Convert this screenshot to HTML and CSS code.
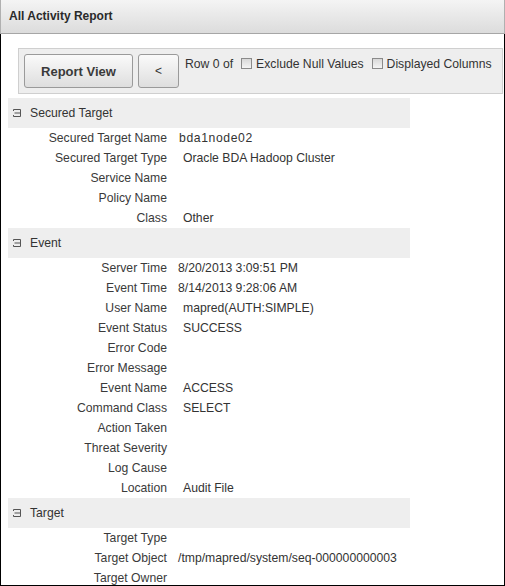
FILE: index.html
```html
<!DOCTYPE html>
<html>
<head>
<meta charset="utf-8">
<link rel="stylesheet" href="styles.css">
</head>
<body>
<div class="frame">
  <div class="header">All Activity Report</div>
  <div class="content">
    <div class="toolbar">
      <button class="btn btn-main">Report View</button>
      <button class="btn btn-prev">&lt;</button>
      <span class="tb-text">Row 0 of</span>
      <label class="check"><span class="cb"></span>Exclude Null Values</label>
      <label class="check"><span class="cb"></span>Displayed Columns</label>
    </div>

    <div class="section">
      <div class="sec-head"><svg class="sec-icon" width="8" height="8" viewBox="0 0 8 8"><path d="M0.5 0.5H7.5V7.5H0.5M0.5 0.5V2M0.5 7.5V6M1.5 4H7.5" fill="none" stroke="#555" stroke-width="1"/></svg>Secured Target</div>
      <div class="rows">
        <div class="lbl">Secured Target Name</div><div class="val ind sp">bda1node02</div>
        <div class="lbl">Secured Target Type</div><div class="val ind">Oracle BDA Hadoop Cluster</div>
        <div class="lbl">Service Name</div><div class="val"></div>
        <div class="lbl">Policy Name</div><div class="val"></div>
        <div class="lbl">Class</div><div class="val ind">Other</div>
      </div>
    </div>

    <div class="section">
      <div class="sec-head"><svg class="sec-icon" width="8" height="8" viewBox="0 0 8 8"><path d="M0.5 0.5H7.5V7.5H0.5M0.5 0.5V2M0.5 7.5V6M1.5 4H7.5" fill="none" stroke="#555" stroke-width="1"/></svg>Event</div>
      <div class="rows">
        <div class="lbl">Server Time</div><div class="val">8/20/2013 3:09:51 PM</div>
        <div class="lbl">Event Time</div><div class="val">8/14/2013 9:28:06 AM</div>
        <div class="lbl">User Name</div><div class="val ind">mapred(AUTH:SIMPLE)</div>
        <div class="lbl">Event Status</div><div class="val ind">SUCCESS</div>
        <div class="lbl">Error Code</div><div class="val"></div>
        <div class="lbl">Error Message</div><div class="val"></div>
        <div class="lbl">Event Name</div><div class="val ind">ACCESS</div>
        <div class="lbl">Command Class</div><div class="val ind">SELECT</div>
        <div class="lbl">Action Taken</div><div class="val"></div>
        <div class="lbl">Threat Severity</div><div class="val"></div>
        <div class="lbl">Log Cause</div><div class="val"></div>
        <div class="lbl">Location</div><div class="val ind">Audit File</div>
      </div>
    </div>

    <div class="section">
      <div class="sec-head"><svg class="sec-icon" width="8" height="8" viewBox="0 0 8 8"><path d="M0.5 0.5H7.5V7.5H0.5M0.5 0.5V2M0.5 7.5V6M1.5 4H7.5" fill="none" stroke="#555" stroke-width="1"/></svg>Target</div>
      <div class="rows">
        <div class="lbl">Target Type</div><div class="val"></div>
        <div class="lbl">Target Object</div><div class="val">/tmp/mapred/system/seq-000000000003</div>
        <div class="lbl">Target Owner</div><div class="val"></div>
      </div>
    </div>
  </div>
</div>
</body>
</html>
```

FILE: styles.css
```css
* { box-sizing: border-box; }
html, body { margin: 0; padding: 0; background: #fff; }
body {
  font-family: "Liberation Sans", Arial, sans-serif;
  font-size: 12.2px;
  color: #333;
}
.frame {
  width: 505px;
  height: 586px;
  overflow: hidden;
  display: flex;
  flex-direction: column;
}
.header {
  height: 34px;
  flex: none;
  padding: 9px 0 0 8px;
  font-weight: bold;
  font-size: 12px;
  line-height: 14px;
  color: #2a2a2a;
  background: linear-gradient(#f4f4f4, #dcdcdc);
  border-bottom: 1px solid #a6a6a6;
  border-left: 1px solid #b0b0b0;
  border-right: 1px solid #b0b0b0;
}
.content {
  flex: 1;
  border-left: 1px solid #000;
  border-right: 1px solid #000;
  border-bottom: 1px solid #000;
  overflow: hidden;
  padding-top: 14px;
}
.toolbar {
  margin: 0 1px 0 17px;
  height: 46px;
  background: #eeeeee;
  border: 1px solid #cfcfcf;
  display: flex;
  align-items: flex-start;
  padding: 5px 0 0 5px;
}
.btn {
  height: 34px;
  border: 1px solid #9a9a9a;
  border-radius: 3px;
  background: linear-gradient(#fafafa, #dedede);
  font-family: "Liberation Sans", Arial, sans-serif;
  color: #333;
  padding: 0;
  margin: 0;
}
.btn-main { width: 109px; font-size: 13px; font-weight: bold; color: #3a3a3a; }
.btn-prev { width: 41px; margin-left: 5px; font-size: 12px; }
.tb-text { margin-left: 6px; line-height: 20px; }
.check {
  display: flex;
  align-items: center;
  line-height: 20px;
  margin-left: 8px;
}
.cb {
  width: 11px;
  height: 11px;
  border: 1px solid #8a8a8a;
  background: linear-gradient(#d8d8d8, #f4f4f4);
  margin-right: 4px;
  margin-top: -1px;
}
.section { margin-left: 7px; width: 402px; }
.toolbar + .section { margin-top: 4px; }
.sec-head {
  height: 30px;
  background: #eeeeee;
  display: flex;
  align-items: center;
  padding-left: 5px;
  color: #333;
}
.sec-icon { margin-right: 9px; margin-top: -1px; }
.rows {
  display: grid;
  grid-template-columns: 159px 1fr;
  column-gap: 11px;
  grid-auto-rows: 20px;
  line-height: 21px;
}
.lbl { text-align: right; color: #3a3a3a; white-space: nowrap; }
.val { color: #333; white-space: nowrap; }
.ind { padding-left: 5px; }
.sp { letter-spacing: 0.6px; padding-left: 1px; }
```
